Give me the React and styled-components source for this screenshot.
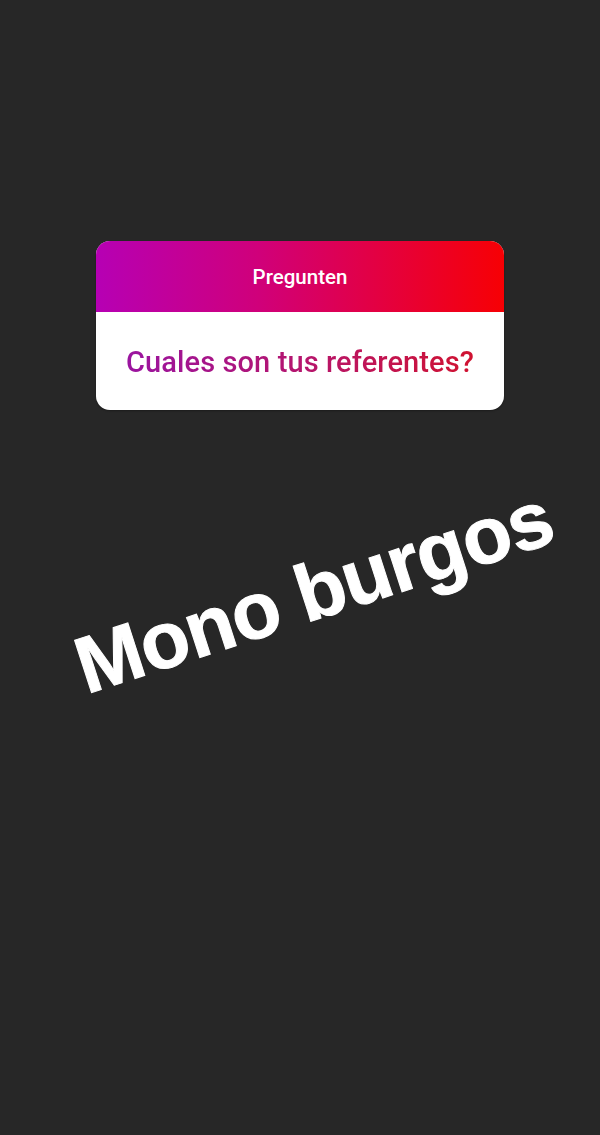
import React from "react";
import styled, { createGlobalStyle } from "styled-components";

const Global = createGlobalStyle`
  html, body { margin: 0; padding: 0; background: #272727; }
  body { font-family: Roboto, "Liberation Sans", sans-serif; }
`;

const Page = styled.div`
  width: 600px;
  height: 1135px;
  background: #272727;
  display: flex;
  flex-direction: column;
  align-items: center;
  overflow: hidden;
`;

const Card = styled.div`
  margin-top: 241px;
  width: 408px;
  height: 169px;
  border-radius: 14px;
  overflow: hidden;
  background: #ffffff;
  display: flex;
  flex-direction: column;
  box-shadow: 0 1px 2px rgba(0, 0, 0, 0.3);
`;

const Header = styled.div`
  height: 71px;
  display: flex;
  align-items: center;
  justify-content: center;
  background: linear-gradient(90deg, #b600b4 0%, #d0007a 40%, #e40040 70%, #f70004 100%);
  color: #ffffff;
  font-family: Roboto, sans-serif;
  font-weight: 500;
  font-size: 20.5px;
`;

const Body = styled.div`
  flex: 1;
  display: flex;
  align-items: center;
  justify-content: center;
  padding-top: 1px;
`;

const Question = styled.span`
  font-family: Roboto, sans-serif;
  font-weight: 500;
  font-size: 29px;
  letter-spacing: 0.1px;
  background: linear-gradient(90deg, #9a14a0 0%, #b5156e 50%, #d01230 100%);
  -webkit-background-clip: text;
  background-clip: text;
  color: transparent;
`;

const Sticker = styled.div`
  margin-top: 142px;
  margin-left: 28px;
  transform: rotate(-18deg);
  color: #ffffff;
  font-family: "Liberation Sans", Arial, sans-serif;
  font-weight: 700;
  font-size: 80px;
  line-height: 1;
  white-space: nowrap;
  letter-spacing: -1px;
  -webkit-text-stroke: 1px #ffffff;
`;

export default function App() {
  return (
    <Page>
      <Global />
      <Card>
        <Header>Pregunten</Header>
        <Body>
          <Question>Cuales son tus referentes?</Question>
        </Body>
      </Card>
      <Sticker>Mono burgos</Sticker>
    </Page>
  );
}
